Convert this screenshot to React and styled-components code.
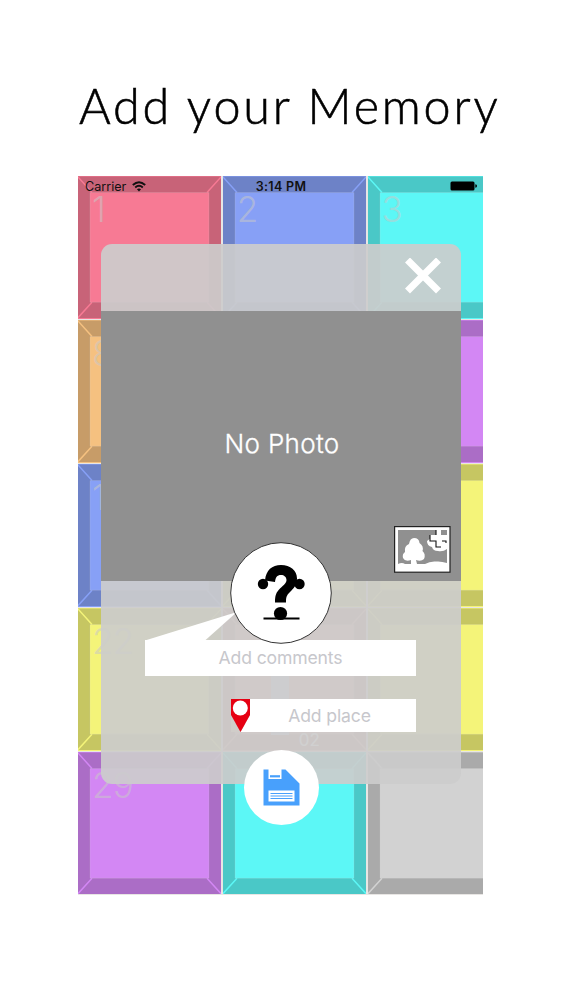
import React from 'react';
import styled, { createGlobalStyle } from 'styled-components';

const GlobalStyle = createGlobalStyle`
  * { box-sizing: border-box; }
  body { margin: 0; background: #fff; overflow: hidden; }
`;

const Page = styled.main`
  width: 562px;
  height: 1000px;
  overflow: hidden;
  font-family: Inter, 'Liberation Sans', sans-serif;
`;

const Title = styled.h1`
  margin: 0;
  padding: 75px 0 0 79px;
  height: 176px;
  font: 300 48.5px/60px Lato, 'Open Sans', sans-serif;
  letter-spacing: 2.8px;
  -webkit-text-stroke: 0.6px #000;
  color: #000;
  white-space: nowrap;
`;

const Phone = styled.section`
  position: relative;
  width: 405px;
  height: 719px;
  margin-left: 78px;
  overflow: hidden;
  background: #e8e6e4;
`;

const Board = styled.div`
  display: grid;
  grid-template-columns: repeat(3, 143px);
  grid-auto-rows: 142.7px;
  column-gap: 1.8px;
  row-gap: 1.25px;
`;

const Tile = styled.div`
  position: relative;
  padding: 11px 0 0 14px;
  background: ${(p) => p.$color};
`;

const Bevel = styled.svg`
  position: absolute;
  inset: 0;
  width: 100%;
  height: 100%;
`;

const Day = styled.span`
  position: relative;
  display: block;
  font-weight: 300;
  font-size: 35px;
  line-height: 44px;
  letter-spacing: -0.8px;
  color: rgba(200, 200, 200, 0.55);
`;

const Stripe = styled.div`
  position: absolute;
  left: 48.5px;
  top: 0;
  width: 17.5px;
  height: 127px;
  background: #d8d8ec;
`;

const Mark = styled.span`
  position: absolute;
  left: 76px;
  bottom: 1px;
  font-size: 17px;
  line-height: 20px;
  color: #fff;
`;

const StatusBar = styled.div`
  position: absolute;
  inset: 0 0 auto;
  display: grid;
  grid-template-columns: 1fr auto 1fr;
  align-items: center;
  height: 20px;
  padding: 0 6px 0 7px;
  font-size: 12.6px;
  color: #111;
`;

const Carrier = styled.div`
  display: flex;
  align-items: center;
  gap: 6px;
`;

const Clock = styled.div`
  font-weight: 600;
  font-size: 12.5px;
  letter-spacing: 0.35px;
`;

const Battery = styled.svg`
  justify-self: end;
`;

const Dialog = styled.div`
  position: absolute;
  left: 23px;
  top: 67.5px;
  display: flex;
  flex-direction: column;
  width: 360px;
  height: 540px;
  border-radius: 11px;
  background: rgba(204, 204, 204, 0.92);
`;

const DialogHeader = styled.header`
  display: flex;
  justify-content: flex-end;
  height: 67px;
  padding: 14px 20px 0 0;
`;

const CloseButton = styled.button`
  width: 36px;
  height: 36px;
  padding: 0;
  border: 0;
  background: none;
  svg { display: block; }
`;

const Photo = styled.div`
  position: relative;
  display: flex;
  align-items: center;
  justify-content: center;
  height: 270px;
  padding: 0 0 4px 2px;
  background: #909090;
  color: #fff;
  font-weight: 300;
  font-size: 26px;
  letter-spacing: 0.3px;
  -webkit-text-stroke: 0.3px #fff;
`;

const AddPhoto = styled.svg`
  position: absolute;
  right: 10px;
  bottom: 8px;
`;

const Form = styled.div`
  display: flex;
  flex-direction: column;
  align-items: flex-end;
  gap: 23px;
  padding: 59px 45px 0 44px;
`;

const Field = styled.div`
  display: flex;
  align-items: center;
  width: ${(p) => p.$width}px;
  height: ${(p) => p.$height}px;
  background: #fff;
`;

const Placeholder = styled.span`
  flex: 1;
  padding-right: ${(p) => p.$shift || 0}px;
  text-align: center;
  font-size: 17.6px;
  letter-spacing: -0.15px;
  color: #c7c7cc;
`;

const Pin = styled.svg`
  flex: none;
  background: #d0cdc9;
`;

const Tail = styled.svg`
  position: absolute;
  left: 44px;
  top: 366px;
`;

const Avatar = styled.svg`
  position: absolute;
  left: 128.5px;
  top: 298.5px;
`;

const SaveButton = styled.button`
  position: absolute;
  left: 142.5px;
  top: 506.5px;
  width: 75px;
  height: 75px;
  padding: 0;
  border: 0;
  border-radius: 50%;
  background: #fff;
  svg { display: block; }
`;

const tiles = [
  ['1', '#f77a94'], ['2', '#87a0f6'], ['3', '#5cf7f6'],
  ['8', '#f5c180'], ['', '#f77a94'], ['', '#d387f4'],
  ['15', '#87a0f6'], ['', '#f4f479'], ['', '#f4f479'],
  ['22', '#f4f479'], ['', '#f5b0a0', '02'], ['', '#f4f479'],
  ['29', '#d387f4'], ['', '#5cf7f6'], ['', '#d2d2d2'],
];

function DayTile({ day, color, mark }) {
  return (
    <Tile $color={color}>
      <Bevel viewBox="0 0 143 143" preserveAspectRatio="none">
        <path fillRule="evenodd" fill="#000" fillOpacity="0.19" d="M0 .6H143V142.400H0ZM12 16.500V126.500H131V16.500Z" />
        <path d="M0 1L14 16.500M143 1L129 16.500M0 142L14 126.500M143 142L129 126.500" stroke={color} strokeWidth="1.5" fill="none" />
        <path d="M12 16.500H131V126.500H12Z" stroke="#ccc" strokeOpacity=".18" fill="none" />
      </Bevel>
      {mark && <Stripe />}
      {mark && <Mark>{mark}</Mark>}
      {day && <Day>{day}</Day>}
    </Tile>
  );
}

export default function App() {
  return (
    <Page>
      <GlobalStyle />
      <Title>Add your Memory</Title>
      <Phone>
        <Board>
          {tiles.map(([day, color, mark], i) => <DayTile key={i} day={day} color={color} mark={mark} />)}
        </Board>
        <StatusBar>
          <Carrier>
            Carrier
            <svg width="14" height="11" viewBox="0 0 14 11" fill="none" stroke="#111" strokeWidth="1.9">
              <path d="M.8 4Q7-1.700 13.200 4M3.200 6.500Q7 3 10.800 6.500" />
              <path d="M7 10.500L4.900 8.300Q7 6.700 9.100 8.300Z" fill="#111" stroke="none" />
            </svg>
          </Carrier>
          <Clock>3:14 PM</Clock>
          <Battery width="27" height="10" viewBox="0 0 27 10">
            <rect x=".5" y=".5" width="24" height="9" rx="1.500" />
            <path d="M25.300 3.200Q27 3.500 27 5T25.300 6.800Z" />
          </Battery>
        </StatusBar>
        <Dialog>
          <DialogHeader>
            <CloseButton aria-label="Close">
              <svg width="36" height="36" viewBox="0 0 36 36">
                <path d="M2.500 2L33.500 33M33.500 2L2.500 33" stroke="#fff" strokeWidth="7" />
              </svg>
            </CloseButton>
          </DialogHeader>
          <Photo>
            No Photo
            <AddPhoto width="57" height="47" viewBox="0 0 57 47">
              <rect x=".6" y=".6" width="55.400" height="45.600" fill="#fff" stroke="#222" strokeWidth="1.200" />
              <path d="M4 4H53V37Q47 35 42 35.500Q36 35 31 38H4Z" fill="#909090" />
              <path d="M4 38Q8 36 11 38H17V34Q11 36 9 32Q8 28 11 26Q10 20 15 18Q16 12 20 12Q25 12 25.500 17Q30 20 28.500 25Q32 28 30 33Q27 36 22 34L23 38H32V41H4Z" fill="#fff" />
              <path d="M33 15L37 12L40 14H53V23Q49 26 44 25Q39 25 38 21Q33 20 33 15Z" fill="#fff" />
              <path d="M42 3H47V9H54V14H47V21H42V15H36V9H42Z" fill="#fff" />
              <path d="M42 4V9M36 9V15H42V21H47M48 15H52V17" fill="none" stroke="#111" strokeWidth="1.1" />
            </AddPhoto>
          </Photo>
          <Tail width="92" height="31" viewBox="0 0 92 31">
            <path d="M0 30.500L92 2L60 30.500Z" fill="#fff" />
          </Tail>
          <Form>
            <Field $width={271} $height={36}><Placeholder>Add comments</Placeholder></Field>
            <Field $width={185} $height={33}>
              <Pin width="19" height="33" viewBox="0 0 19 33">
                <path d="M19 16V33H9.500Z" fill="#fff" />
                <path d="M0 0H19V16L9.500 33L0 16Z" fill="#e60012" />
                <circle cx="9.300" cy="9" r="7.500" fill="#fff" />
              </Pin>
              <Placeholder $shift={7}>Add place</Placeholder>
            </Field>
          </Form>
          <Avatar width="102" height="102" viewBox="0 0 102 102">
            <circle cx="51" cy="51" r="50.300" fill="#fff" stroke="#333" />
            <path d="M35 38.500C36 28 42 23 51 23C60.500 23 67 28.500 67 36.500C67 43 63.500 46.500 60 50C56.500 53.500 56 55 56 60.500H45C45 53.500 46 50.500 50 46.500C54 43 56.500 41 56.500 38C56.500 35 54 33 51 33C47 33 45.500 35.500 45 40Z" />
            <circle cx="33" cy="42" r="5.200" />
            <circle cx="69.500" cy="42" r="5.200" />
            <circle cx="50.500" cy="71.500" r="6.600" />
            <path d="M33.500 76.500H69.500" stroke="#000" strokeWidth="2" />
          </Avatar>
          <SaveButton aria-label="Save">
            <svg width="75" height="75" viewBox="0 0 75 75">
              <path d="M19.500 19.500H24.500V29H37.500V19.500H41.500L55.500 33.500V55.500H19.500Z" fill="#48a0fc" />
              <path d="M24.500 40.500H50.500V51.500H24.500Z" fill="#fff" />
              <path d="M26 26.300H36" stroke="#48a0fc" strokeWidth="2.2" />
              <path d="M26.500 43.500H48.500M26.500 46H48.500M26.500 48.500H48.500" stroke="#48a0fc" strokeWidth="1.2" />
            </svg>
          </SaveButton>
        </Dialog>
      </Phone>
    </Page>
  );
}
